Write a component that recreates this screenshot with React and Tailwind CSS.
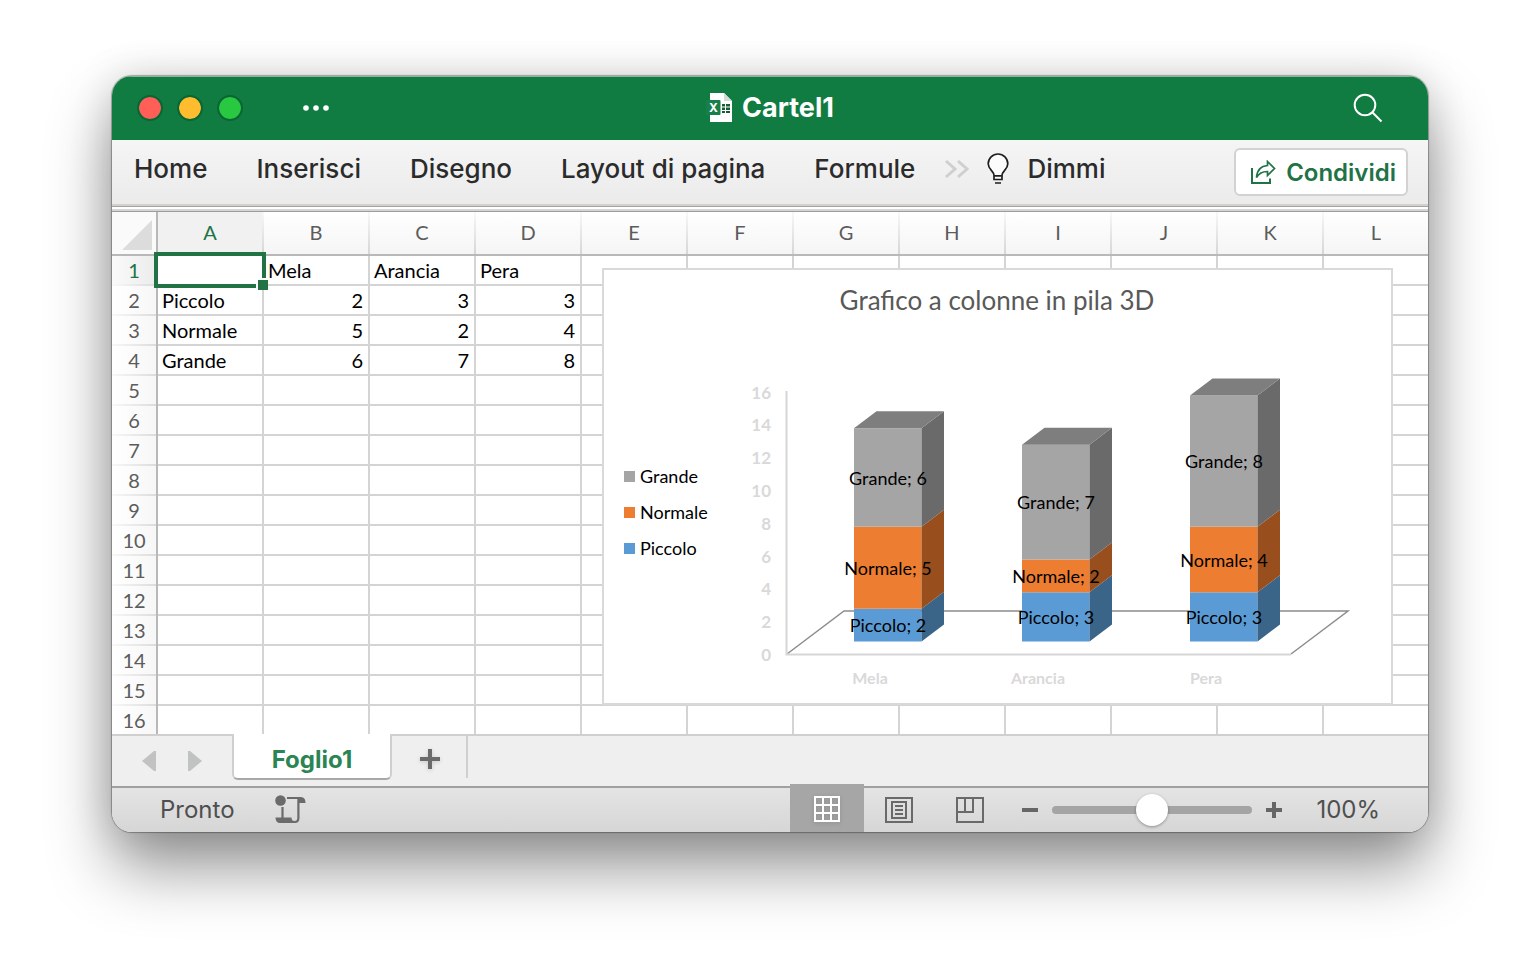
import React from "react";

const COLUMNS = ["A", "B", "C", "D", "E", "F", "G", "H", "I", "J", "K", "L"];
const ROWS = Array.from({ length: 16 }, (_, i) => i + 1);
const DATA = {
  1: ["", "Mela", "Arancia", "Pera"],
  2: ["Piccolo", 2, 3, 3],
  3: ["Normale", 5, 2, 4],
  4: ["Grande", 6, 7, 8],
};

const SERIES = [
  { name: "Piccolo", front: "#5b9bd5", side: "#3a6589" },
  { name: "Normale", front: "#ed7d31", side: "#984f1d" },
  { name: "Grande", front: "#a5a5a5", side: "#6a6a6a" },
];
const STACKS = [
  { name: "Mela", x: 854, values: [2, 5, 6] },
  { name: "Arancia", x: 1022, values: [3, 2, 7] },
  { name: "Pera", x: 1190, values: [3, 4, 8] },
];
const UNIT = 16.4;
const BASE = 641.5;
const BAR = 67.5;
const DX = 22.5;
const DY = 17;

function Stack({ stack }) {
  let sum = 0;
  const right = stack.x + BAR;
  const parts = stack.values.map((value, i) => {
    const bottom = BASE - sum * UNIT;
    sum += value;
    return { value, bottom, top: BASE - sum * UNIT, ...SERIES[i] };
  });
  const top = BASE - sum * UNIT;
  return (
    <g>
      {parts.map((p) => (
        <g key={p.name}>
          <rect x={stack.x} y={p.top} width={BAR} height={p.bottom - p.top} fill={p.front} />
          <polygon
            points={`${right},${p.bottom} ${right + DX},${p.bottom - DY} ${right + DX},${p.top - DY} ${right},${p.top}`}
            fill={p.side}
          />
        </g>
      ))}
      <polygon
        points={`${stack.x},${top} ${stack.x + DX},${top - DY} ${right + DX},${top - DY} ${right},${top}`}
        fill="#7e7e7e"
      />
      {parts.map((p) => (
        <text key={p.name} x={stack.x + 34} y={(p.top + p.bottom) / 2 + 7} textAnchor="middle" fontSize="18" fill="#000">
          {p.name}; {p.value}
        </text>
      ))}
    </g>
  );
}

function Chart() {
  return (
    <figure className="absolute left-[490px] top-[56px] border-2 border-[#d9d9d9] bg-white">
      <svg viewBox="604 270 787 433" className="block h-[433px] w-[787px] font-['Lato','Open_Sans',sans-serif]" role="img" aria-label="Grafico a colonne in pila 3D">
        <text x="997" y="310" textAnchor="middle" fontSize="26" fill="#595959">Grafico a colonne in pila 3D</text>
        {[...SERIES].reverse().map((s, i) => (
          <g key={s.name}>
            <rect x="624" y={471 + i * 36} width="11" height="11" fill={s.front} />
            <text x="640" y={483 + i * 36} fontSize="18" fill="#000">{s.name}</text>
          </g>
        ))}
        {[0, 2, 4, 6, 8, 10, 12, 14, 16].map((n) => (
          <text key={n} x="771" y={661 - n * 16.4} textAnchor="end" fontSize="17" fontWeight="700" fill="#d9d9d9">{n}</text>
        ))}
        <path d="M787 654L844 611H1348L1291 654" fill="none" stroke="#8c8c8c" strokeWidth="1.5" />
        <path d="M786.5 391V654.5H1291" fill="none" stroke="#d6d6d6" strokeWidth="2" />
        {STACKS.map((s) => (
          <g key={s.name}>
            <Stack stack={s} />
            <text x={s.x + 16} y="684" textAnchor="middle" fontSize="16" fontWeight="700" fill="#d9d9d9">{s.name}</text>
          </g>
        ))}
      </svg>
    </figure>
  );
}

function Sheet() {
  return (
    <div className="relative overflow-hidden bg-white">
      <table className="w-full table-fixed border-separate border-spacing-0 font-['Lato','Open_Sans',sans-serif] text-[20px] leading-6">
        <colgroup>
          <col className="w-[46px]" />
          {COLUMNS.map((c) => (
            <col key={c} className={c === "L" ? "" : "w-[106px]"} />
          ))}
        </colgroup>
        <thead>
          <tr className="h-11">
            <th className="border-b-2 border-r-2 border-[#b8b8b8] bg-[#fafafa] p-0" aria-label="Seleziona tutto">
              <svg viewBox="0 0 44 42" className="block h-[42px] w-11"><path d="M40 8V38H10Z" fill="#dcdcdc" /></svg>
            </th>
            {COLUMNS.map((c) => (
              <th
                key={c}
                scope="col"
                className={
                  "border-b-2 border-b-[#b8b8b8] p-0 font-normal " +
                  (c === "A" ? "bg-[#f1f1f1] text-[#217346]" : "bg-linear-to-b from-white to-[#f5f5f5] text-[#5c5c5c]")
                }
              >
                <div className="flex h-[42px]">
                  <span className="flex-1 pt-2">{c}</span>
                  {c !== "L" && <span className="w-0.5 bg-linear-to-b from-[#f8f8f8] to-[#d6d6d6]" />}
                </div>
              </th>
            ))}
          </tr>
        </thead>
        <tbody>
          {ROWS.map((r) => (
            <tr key={r} className={r === 16 ? "h-7" : "h-[30px]"}>
              <th
                scope="row"
                className={
                  "border-r-2 border-r-[#b8b8b8] p-0 font-normal " +
                  (r === 1 ? "bg-linear-to-r from-[#fafafa] to-[#ececec] text-[#217346]" : "bg-linear-to-r from-white to-[#f7f7f7] text-[#5c5c5c]")
                }
              >
                <div className={r === 16 ? "flex h-7 flex-col" : "flex h-[30px] flex-col"}>
                  <span className="flex flex-1 items-center justify-center">{r}</span>
                  {r !== 16 && <span className="h-0.5 bg-linear-to-r from-[#f8f8f8] to-[#dcdcdc]" />}
                </div>
              </th>
              {COLUMNS.map((c, i) => {
                const value = DATA[r]?.[i];
                return (
                  <td
                    key={c}
                    className={
                      "border-[#d4d4d4] py-0 text-black " +
                      (r === 16 ? "" : "border-b-2 ") +
                      (c === "L" ? "" : "border-r-2 ") +
                      (typeof value === "number" ? "pr-[5px] text-right " : "pl-1 text-left ") +
                      (r === 1 && c === "A" ? "relative" : "")
                    }
                  >
                    {value}
                    {r === 1 && c === "A" && (
                      <div className="absolute -inset-1 z-10 border-4 border-[#217346]">
                        <span className="absolute -bottom-1.5 -right-1.5 size-3 border-l-2 border-t-2 border-white bg-[#217346]" />
                      </div>
                    )}
                  </td>
                );
              })}
            </tr>
          ))}
        </tbody>
      </table>
      <Chart />
    </div>
  );
}

function ExcelIcon() {
  return (
    <svg viewBox="0 0 26 30" className="h-[30px] w-[26px]">
      <path d="M4 0H18L26 8V29H4Z" fill="#fff" />
      <path d="M18 0V8H26Z" fill="#d5dcd8" />
      <path d="M16 11h3v2.500h-3zM20 11h4v2.500h-4zM16 14.500h3v2.500h-3zM20 14.500h4v2.500h-4zM16 18h3v2h-3zM20 18h4v2h-4z" fill="#185c37" />
      <rect x="0" y="7" width="14.500" height="15" rx="1" fill="#17804a" />
      <text x="7.500" y="19" textAnchor="middle" fontSize="12" fontWeight="700" fill="#fff">X</text>
    </svg>
  );
}

function TitleBar() {
  return (
    <header className="grid h-16 grid-cols-[1fr_auto_1fr] items-center bg-[#107c41] shadow-[inset_0_1px_0_#8fb29d]">
      <div className="flex items-center gap-3.5 pl-[25px]">
        <button aria-label="Chiudi" className="size-[26px] rounded-full border-2 border-[#0c6534] bg-[#ff5f57] bg-clip-padding" />
        <button aria-label="Riduci" className="size-[26px] rounded-full border-2 border-[#0c6534] bg-[#febc2e] bg-clip-padding" />
        <button aria-label="Ingrandisci" className="size-[26px] rounded-full border-2 border-[#0c6534] bg-[#28c840] bg-clip-padding" />
        <button aria-label="Altro" className="ml-[45px]">
          <svg viewBox="0 0 28 8" className="h-2 w-7" fill="#fff">
            <circle cx="4" cy="4" r="2.800" /><circle cx="14" cy="4" r="2.800" /><circle cx="24" cy="4" r="2.800" />
          </svg>
        </button>
      </div>
      <div className="flex items-center gap-2.5">
        <ExcelIcon />
        <h1 className="text-[27px] font-bold leading-8 text-white">Cartel1</h1>
      </div>
      <button aria-label="Cerca" className="mr-[45px] justify-self-end">
        <svg viewBox="0 0 30 30" className="size-[30px]" fill="none" stroke="#fff" strokeWidth="2">
          <circle cx="12" cy="12" r="10.300" /><path d="M19.300 19.300L28.500 28.500" />
        </svg>
      </button>
    </header>
  );
}

function Ribbon() {
  return (
    <div className="flex h-16 items-start justify-between bg-linear-to-b from-[#f5f5f5] to-[#ebebeb] pl-[22px] pr-5">
      <nav className="flex items-center gap-[49px] pt-[13px] text-[26px] font-medium leading-8 text-[#2b2b2b]">
        {["Home", "Inserisci", "Disegno", "Layout di pagina", "Formule"].map((t) => (
          <button key={t} className="whitespace-nowrap">{t}</button>
        ))}
        <div className="-ml-5 flex items-center gap-[17px]">
          <button aria-label="Altre schede">
            <svg viewBox="0 0 26 20" className="h-5 w-[26px]" fill="none" stroke="#cfcfcf" strokeWidth="3">
              <path d="M2 2L11 10L2 18M14 2L23 10L14 18" />
            </svg>
          </button>
          <button className="flex items-center gap-[18px]">
            <svg viewBox="0 0 22 32" className="h-8 w-[22px]" fill="none" stroke="#1f1f1f" strokeWidth="1.700">
              <path d="M7 22.500C7 18 1.200 16.500 1.200 10.800A9.800 9.800 0 0 1 20.800 10.800C20.800 16.500 15 18 15 22.500V26.500H7Z" fill="#fcfcfc" />
              <path d="M7 22.800H15M8 30H14" />
            </svg>
            Dimmi
          </button>
        </div>
      </nav>
      <button className="mt-2 flex h-12 items-center gap-2.5 rounded-md border-2 border-[#d2d2d2] bg-white pl-[14px] pr-2.5 pt-0.5 text-[24px] font-semibold text-[#217346]">
        <svg viewBox="0 0 26 26" className="size-[26px]" fill="none" stroke="#217346" strokeWidth="2">
          <path d="M2 8V23H20V18.500" />
          <path d="M17.500 1.500L24.500 8.500L17.500 15.500V11.500C12.500 11.500 9 13 6.500 17.500C7 10.500 11 6 17.500 5.500Z" strokeWidth="1.700" />
        </svg>
        Condividi
      </button>
    </div>
  );
}

function TabBar() {
  return (
    <div className="flex h-[52px] items-start border-t-2 border-[#cfcfcf] bg-[#efefef]">
      <div className="flex w-[120px] gap-8 pl-[30px] pt-[15px]">
        <button aria-label="Foglio precedente">
          <svg viewBox="0 0 14 20" className="h-5 w-3.5"><path d="M14 0V20H12L0 10L12 0Z" fill="#c1c3c2" /></svg>
        </button>
        <button aria-label="Foglio successivo">
          <svg viewBox="0 0 14 20" className="h-5 w-3.5"><path d="M0 0V20H2L14 10L2 0Z" fill="#c1c3c2" /></svg>
        </button>
      </div>
      <button className="-mt-0.5 h-[46px] w-40 rounded-b-md border-x-2 border-b-2 border-x-[#cfcfcf] border-b-[#a8a8a8] bg-white pt-2 text-[24px] font-bold leading-8 text-[#2a8553]">
        Foglio1
      </button>
      <button aria-label="Nuovo foglio" className="flex h-[42px] w-[76px] items-center border-r-2 border-[#cfcfcf] pl-7 pt-1">
        <svg viewBox="0 0 20 20" className="size-5 text-[#6b6b6b] drop-shadow-sm"><path d="M10 0V20M0 10H20" stroke="currentColor" strokeWidth="4" /></svg>
      </button>
    </div>
  );
}

function StatusBar() {
  return (
    <footer className="flex h-[46px] items-center justify-between border-t-2 border-[#a0a0a0] bg-linear-to-b from-[#e4e4e4] to-[#d6d6d6] text-[24px] leading-8 text-[#4f4f4f]">
      <div className="flex items-center gap-10 pl-12">
        <span>Pronto</span>
        <button aria-label="Registra macro">
          <svg viewBox="0 0 31 30" className="h-[30px] w-[31px]">
            <circle cx="5.500" cy="5.500" r="5.300" fill="#6b6b6b" />
            <path d="M7.500 12V23" stroke="#6b6b6b" strokeWidth="2.200" />
            <path d="M12 2H25C29 2 30.500 4 30.500 8H24.500V23C24.500 26 23 28 20 28H5C2 28 .5 26 .5 22.500H16.500C16.500 25 17.500 26 19.500 26C21.500 26 22.300 25 22.300 23V4H12Z" fill="#6b6b6b" />
          </svg>
        </button>
      </div>
      <div className="flex items-center pr-12">
        <button aria-label="Normale" className="-mt-1 flex h-12 w-[74px] items-center justify-center bg-[#a6a6a6]">
          <svg viewBox="0 0 26 26" className="mt-0.5 size-[26px] drop-shadow-sm" fill="none" stroke="#fff" strokeWidth="2">
            <path d="M1 1H25V25H1ZM9 1V25M17 1V25M1 9H25M1 17H25" />
          </svg>
        </button>
        <button aria-label="Layout di pagina" className="ml-[21px]">
          <svg viewBox="0 0 28 26" className="h-[26px] w-7" fill="none" stroke="#696969" strokeWidth="2">
            <path d="M1 1H27V25H1ZM7 5H21V21H7ZM10 9H18M10 13H18M10 17H18" />
          </svg>
        </button>
        <button aria-label="Interruzioni di pagina" className="ml-[43px]">
          <svg viewBox="0 0 28 26" className="h-[26px] w-7" fill="none" stroke="#696969" strokeWidth="2">
            <path d="M1 1H27V25H1ZM9 1V15M17 1V15M1 15H18" />
          </svg>
        </button>
        <button aria-label="Riduci zoom" className="ml-[38px]">
          <svg viewBox="0 0 16 16" className="size-4"><path d="M0 8H16" stroke="#666" strokeWidth="4" /></svg>
        </button>
        <input
          type="range"
          aria-label="Zoom"
          min="0"
          max="200"
          defaultValue="100"
          className="mx-3.5 h-8 w-[200px] appearance-none bg-transparent [&::-webkit-slider-runnable-track]:h-2 [&::-webkit-slider-runnable-track]:rounded-full [&::-webkit-slider-runnable-track]:bg-[#a4a4a4] [&::-webkit-slider-thumb]:-mt-3 [&::-webkit-slider-thumb]:size-8 [&::-webkit-slider-thumb]:appearance-none [&::-webkit-slider-thumb]:rounded-full [&::-webkit-slider-thumb]:bg-white [&::-webkit-slider-thumb]:shadow-[0_1px_3px_rgba(0,0,0,0.35)]"
        />
        <button aria-label="Aumenta zoom">
          <svg viewBox="0 0 16 16" className="size-4"><path d="M0 8H16M8 0V16" stroke="#666" strokeWidth="4" /></svg>
        </button>
        <span className="ml-[34px]">100%</span>
      </div>
    </footer>
  );
}

export default function App() {
  return (
    <div className="min-h-screen bg-white px-28 pb-28 pt-[76px] font-['Inter',sans-serif]">
      <main className="overflow-hidden rounded-[20px] bg-white shadow-[0_0_1px_1px_rgba(0,0,0,0.3),0_0_40px_rgba(0,0,0,0.14),0_36px_64px_rgba(0,0,0,0.42)]">
        <TitleBar />
        <Ribbon />
        <div className="h-2 border-b border-t-2 border-b-[#9c9c9c] border-t-[#d4d0cc] bg-white">
          <div className="h-[5px] border-b-2 border-t border-b-[#d6d6d6] border-t-[#a3a3a3]" />
        </div>
        <Sheet />
        <TabBar />
        <StatusBar />
      </main>
    </div>
  );
}
